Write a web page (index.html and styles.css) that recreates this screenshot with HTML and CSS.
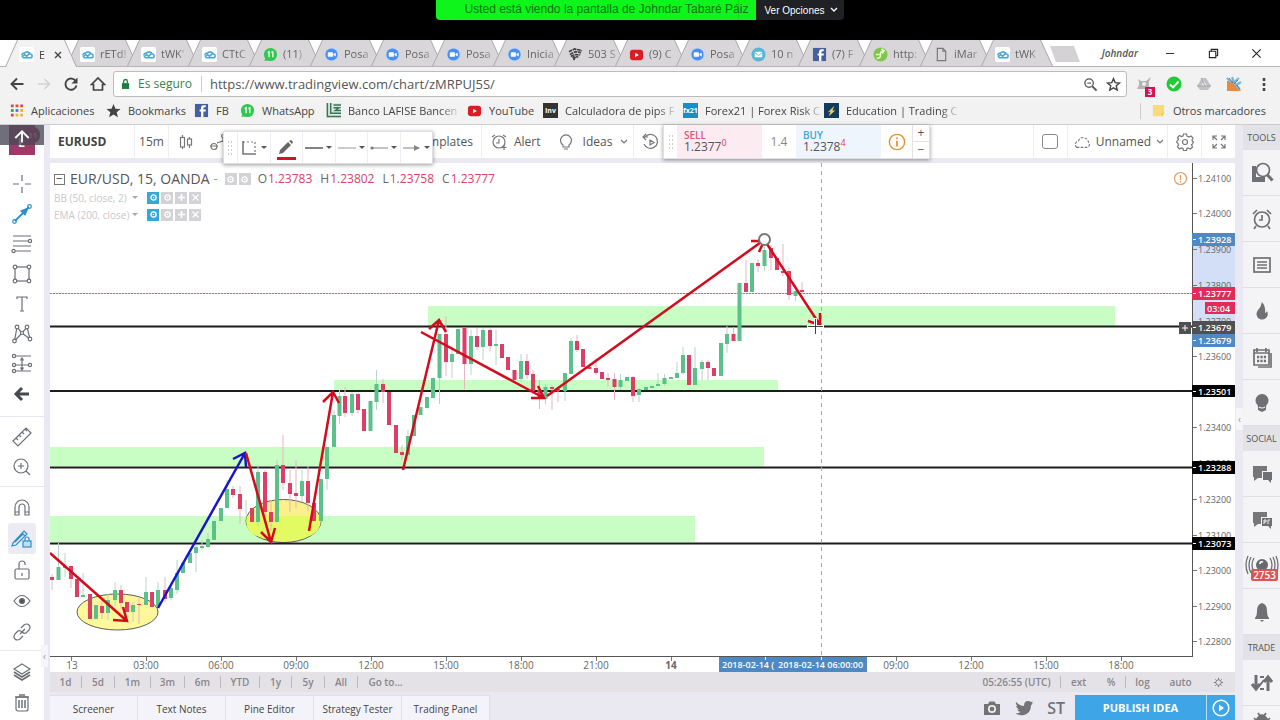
FILE: index.html
```html
<!DOCTYPE html>
<html lang="es">
<head>
<meta charset="utf-8">
<title>EURUSD</title>
<link rel="stylesheet" href="styles.css">
</head>
<body>
<svg class="sprite" aria-hidden="true">
  <symbol id="tv" viewBox="0 0 16 16"><rect width="16" height="16" rx="2" fill="#fff"/><path d="M3 11l3-3 2 2 4-4M4 11.500h8a2 2 0 0 0 0-4 3.500 3.500 0 0 0-6-1 2.500 2.500 0 0 0-3 2.500" fill="none" stroke="#45a9d6" stroke-width="1.600"/></symbol>
  <symbol id="wa" viewBox="0 0 16 16"><circle cx="8" cy="8" r="7" fill="#2dc84d"/><path d="M1.500 15l1-4 3 3z" fill="#2dc84d"/><path d="M5 6l1.500-1v6M9 6l1.500-1v6" fill="none" stroke="#fff" stroke-width="1.400"/></symbol>
  <symbol id="zoomcam" viewBox="0 0 16 16"><circle cx="8" cy="8" r="7.500" fill="#b9d8f8"/><circle cx="8" cy="8" r="6.500" fill="#4b8df0"/><rect x="4" y="5.500" width="5.500" height="5" rx="1" fill="#fff"/><path d="M10 7.500l2.500-1.500v4L10 8.500z" fill="#fff"/></symbol>
  <symbol id="wing" viewBox="0 0 16 16"><path d="M1 5l6-3 8 2M2 8l6-3 6 1M3 10l5-2 5 .5M6 14l2-4 3 1M5 12l2-2" fill="none" stroke="#444" stroke-width="1.800" stroke-dasharray="4 .7"/></symbol>
  <symbol id="yt" viewBox="0 0 16 16"><rect x="1" y="3" width="14" height="11" rx="3" fill="#dd1b24"/><path d="M6.500 6v5l4-2.500z" fill="#fff"/></symbol>
  <symbol id="mail" viewBox="0 0 16 16"><circle cx="8" cy="8" r="7.500" fill="#55b6d6"/><rect x="4" y="5" width="8" height="6" rx="1" fill="#fff"/><path d="M4 6l4 3 4-3" fill="none" stroke="#55b6d6"/></symbol>
  <symbol id="fb" viewBox="0 0 16 16"><rect x="1" y="1" width="14" height="14" fill="#4460a0"/><path d="M10 15V9h2.500V7H10V5.500Q10 4.500 11 4.500h1.500v-2H10Q7.500 2.500 7.500 5v2H6v2h1.500v6z" fill="#fff"/></symbol>
  <symbol id="green" viewBox="0 0 16 16"><circle cx="8" cy="8" r="7.500" fill="#83c44b"/><path d="M4 12q4 0 4-3V7q0-2 3-3M9 2l3 2-2 3M3 8h5" fill="none" stroke="#e8ffd8" stroke-width="1.500"/></symbol>
  <symbol id="page" viewBox="0 0 16 16"><path d="M3.500 1.500h6l3 3v10h-9zM9.500 1.500v3h3" fill="none" stroke="#777" stroke-width="1.200"/></symbol>
  <symbol id="eye" viewBox="0 0 11 11"><circle cx="5.500" cy="5.500" r="2.600" fill="none" stroke="#fff" stroke-width="1.300"/><circle cx="5.500" cy="5.500" r=".8" fill="#fff"/></symbol>
  <symbol id="plus" viewBox="0 0 11 11"><path d="M5.500 2v7M2 5.500h7" stroke="#fff" stroke-width="1.600"/></symbol>
  <symbol id="cross" viewBox="0 0 11 11"><path d="M2.500 2.500l6 6M8.500 2.500l-6 6" stroke="#fff" stroke-width="1.200"/></symbol>
</svg>

<header class="share">
  <div class="share-name">Usted está viendo la pantalla de Johndar Tabaré Páiz</div>
  <button class="share-options">Ver Opciones <svg width="8" height="6" viewBox="0 0 8 6"><path d="M1 1l3 3 3-3" fill="none" stroke="#fff" stroke-width="1.300"/></svg></button>
</header>

<nav class="tabs">
  <button class="tab active"><svg><use href="#tv"/></svg><span>E</span><svg class="close" viewBox="0 0 8 8"><path d="M1 1l6 6M7 1L1 7" stroke="#444" stroke-width="1.400"/></svg></button>
  <button class="tab"><svg><use href="#tv"/></svg><span>rETd!</span></button>
  <button class="tab"><svg><use href="#tv"/></svg><span>tWK'</span></button>
  <button class="tab"><svg><use href="#tv"/></svg><span>CTtC</span></button>
  <button class="tab"><svg><use href="#wa"/></svg><span>(11)</span></button>
  <button class="tab"><svg><use href="#zoomcam"/></svg><span>Posa</span></button>
  <button class="tab"><svg><use href="#zoomcam"/></svg><span>Posa</span></button>
  <button class="tab"><svg><use href="#zoomcam"/></svg><span>Posa</span></button>
  <button class="tab"><svg><use href="#zoomcam"/></svg><span>Inicia</span></button>
  <button class="tab"><svg><use href="#wing"/></svg><span>503 S</span></button>
  <button class="tab"><svg><use href="#yt"/></svg><span>(9) C</span></button>
  <button class="tab"><svg><use href="#zoomcam"/></svg><span>Posa</span></button>
  <button class="tab"><svg><use href="#mail"/></svg><span>10 n</span></button>
  <button class="tab"><svg><use href="#fb"/></svg><span>(7) F</span></button>
  <button class="tab"><svg><use href="#green"/></svg><span>http:</span></button>
  <button class="tab"><svg><use href="#page"/></svg><span>iMar</span></button>
  <button class="tab"><svg><use href="#tv"/></svg><span>tWK</span></button>
  <button class="newtab" aria-label="Nueva pestaña"></button>
  <span class="profile">Johndar</span>
  <button class="win" aria-label="Minimizar"><svg viewBox="0 0 12 12"><path d="M1 6h9" stroke="#222"/></svg></button>
  <button class="win" aria-label="Restaurar"><svg viewBox="0 0 12 12"><path d="M1.500 3.500h7v7h-7zM3.500 3V1.500h7v7H9" fill="none" stroke="#222" stroke-width="1.200"/></svg></button>
  <button class="win" aria-label="Cerrar"><svg viewBox="0 0 12 12"><path d="M1.500 1.500l9 9M10.500 1.500l-9 9" stroke="#222" stroke-width="1.200"/></svg></button>
</nav>

<div class="address">
  <button aria-label="Atrás"><svg viewBox="0 0 16 16"><path d="M14.500 8H2.500M8 2.500L2.500 8 8 13.500" fill="none" stroke="#444" stroke-width="1.900"/></svg></button>
  <button aria-label="Adelante"><svg viewBox="0 0 16 16"><path d="M2 8h11M8.500 3l5 5-5 5" fill="none" stroke="#d2d2d2" stroke-width="1.600"/></svg></button>
  <button aria-label="Recargar"><svg viewBox="0 0 16 16"><path d="M13 5.500A5.600 5.600 0 1 0 13.500 9.500" fill="none" stroke="#444" stroke-width="1.900"/><path d="M14.500 1.500v6h-6z" fill="#444"/></svg></button>
  <button aria-label="Inicio"><svg viewBox="0 0 16 16"><path d="M1.500 8.500L8 2l6.500 6.500h-2v5.500h-9V8.500z" fill="none" stroke="#444" stroke-width="1.700"/></svg></button>
  <div class="urlbox">
    <svg class="lock" viewBox="0 0 10 12"><rect x="1" y="5" width="8" height="6.500" fill="#1b7f3b"/><path d="M3 5V3a2 2 0 0 1 4 0v2" fill="none" stroke="#1b7f3b" stroke-width="1.400"/></svg>
    <span class="secure">Es seguro</span>
    <input class="url" type="text" aria-label="Dirección" value="https://www.tradingview.com/chart/zMRPUJ5S/">
    <svg viewBox="0 0 16 16"><circle cx="6.500" cy="6.500" r="4.500" fill="none" stroke="#555" stroke-width="1.400"/><path d="M10 10l4.500 4.500" stroke="#555" stroke-width="2"/><path d="M4.500 6.500h4" stroke="#555" stroke-width="1.200"/></svg>
    <svg viewBox="0 0 16 16"><path d="M8 1.800l1.800 4.200 4.600.4-3.500 3 1.100 4.500-4-2.400-4 2.400 1.100-4.500-3.500-3 4.600-.4z" fill="none" stroke="#444" stroke-width="1.500"/></svg>
  </div>
  <div class="extensions">
    <button class="ext" aria-label="Extensión"><svg viewBox="0 0 16 16"><path d="M2 3l3 2h5l5-4-2 5v4l2 3H1l2-4V6z" fill="#b4b3b5"/><circle cx="8" cy="8" r="2" fill="#eee"/></svg><span class="ext-badge">3</span></button>
    <button class="ext" aria-label="Verificado"><svg viewBox="0 0 16 16"><circle cx="8" cy="8" r="7.500" fill="#20cb37"/><path d="M4 8.500l3 3 5.500-6" fill="none" stroke="#fff" stroke-width="1.900"/></svg></button>
    <button class="ext" aria-label="Drive"><svg viewBox="0 0 16 16"><path d="M6 2h4l5 8-3 4H4l-3-4z" fill="#c1c1c3"/><path d="M8 5l3 5H5z" fill="#e9e9e9"/><path d="M5 2l4 8M1 10h14" stroke="#a7a7aa"/></svg></button>
    <button class="ext" aria-label="Herramienta"><svg viewBox="0 0 16 16"><path d="M1 5h7l7 10H1z" fill="#e58b42"/><path d="M1 2l4 4M6 1l3 8M13 2l-6 5M15 6l-5 3M10 10l4 4" stroke="#7fb4da" stroke-width="2.200"/><path d="M3 2l4 5M12 4l-4 4M11 9l3 4" stroke="#3d83b8"/></svg></button>
    <button class="ext" aria-label="Menú"><svg viewBox="0 0 16 16"><path d="M8 2v3M8 7v3M8 12v3" stroke="#444" stroke-width="2.600"/></svg></button>
  </div>
</div>

<nav class="bookmarks">
  <a href="#"><svg viewBox="0 0 16 16"><path d="M2 3h3M2 13h3" stroke="#dc4b3e" stroke-width="3"/><path d="M7 3h3M12 3h3" stroke="#dc4b3e" stroke-width="3"/><path d="M2 8h3" stroke="#36a454" stroke-width="3"/><path d="M7 8h3" stroke="#3a7de0" stroke-width="3"/><path d="M12 8h3M7 13h8" stroke="#eab52f" stroke-width="3" stroke-dasharray="3 2"/></svg><span>Aplicaciones</span></a>
  <a href="#"><svg viewBox="0 0 16 16"><path d="M8 1l2.100 5 5.400.400-4.100 3.500 1.300 5.200L8 12.300l-4.700 2.800 1.300-5.200L.5 6.400 5.900 6z" fill="#444"/></svg><span>Bookmarks</span></a>
  <a href="#"><svg><use href="#fb"/></svg><span>FB</span></a>
  <a href="#"><svg><use href="#wa"/></svg><span>WhatsApp</span></a>
  <a href="#"><svg viewBox="0 0 16 16"><rect width="16" height="16" fill="#dfe9e3"/><path d="M1.500 0v14.500H16M5 0v11h11M8 2h8M8 5h6l-4 3h6" fill="none" stroke="#397557" stroke-width="1.600"/></svg><span class="fade">Banco LAFISE Bancen</span></a>
  <a href="#"><svg><use href="#yt"/></svg><span>YouTube</span></a>
  <a href="#"><i class="mark dark">Inv</i><span class="fade">Calculadora de pips F</span></a>
  <a href="#"><i class="mark blue">fx21</i><span class="fade">Forex21 | Forex Risk C</span></a>
  <a href="#"><svg viewBox="0 0 16 16"><rect width="16" height="16" fill="#123b5d"/><path d="M4 10l7-7-2 5h3l-7 6 2-5z" fill="#f0cf68"/></svg><span class="fade">Education | Trading C</span></a>
  <a href="#" class="others"><svg viewBox="0 0 16 16"><path d="M2 2h12v9l-2 3H2z" fill="#f8dc79"/><path d="M12 14v-3h2" fill="none" stroke="#e5bd4e"/></svg><span>Otros marcadores</span></a>
</nav>

<main class="app">
  <aside class="drawbar">
    <div class="logo"><b>L</b><small>11</small><div class="logo-shade"><svg viewBox="0 0 16 16"><path d="M2 8l6-6 6 6M8 3v9" fill="none" stroke="#fff" stroke-width="1.600"/></svg></div></div>
    <div class="tools first">
      <button aria-label="Cruz"><svg viewBox="0 0 22 22"><path d="M11 2v6M11 14v6M2 11h6M14 11h6"/></svg></button>
      <button aria-label="Línea" class="on"><svg viewBox="0 0 22 22"><path d="M4 18L18 4" stroke-width="1.800"/><path d="M17 5l-7 3 4 4z" fill="#2b8fcb"/><circle cx="3.500" cy="18.500" r="1.800"/><circle cx="18.500" cy="3.500" r="1.800"/></svg></button>
      <button aria-label="Fibonacci"><svg viewBox="0 0 22 22"><path d="M2 3h18M2 8h15M2 13h18M4 18h16"/><circle cx="19" cy="8" r="1.600"/><circle cx="2.500" cy="18" r="1.600"/></svg></button>
      <button aria-label="Rectángulo"><svg viewBox="0 0 22 22"><rect x="4" y="4" width="14" height="14"/><g fill="#fff"><circle cx="4" cy="4" r="1.800"/><circle cx="18" cy="4" r="1.800"/><circle cx="4" cy="18" r="1.800"/><circle cx="18" cy="18" r="1.800"/></g></svg></button>
      <button aria-label="Texto"><svg viewBox="0 0 22 22"><path d="M6 6V4h10v2M11 4v14M9 18h4"/></svg></button>
      <button aria-label="Patrones"><svg viewBox="0 0 22 22"><path d="M3.500 18L6 4l5 6 5-6 3 12-8-6z"/><g fill="#fff"><circle cx="6" cy="4" r="1.800"/><circle cx="16" cy="4" r="1.800"/><circle cx="3.500" cy="18" r="1.800"/><circle cx="19" cy="16" r="1.800"/><circle cx="11" cy="10" r="1.500"/></g></svg></button>
      <button aria-label="Proyección"><svg viewBox="0 0 22 22"><path d="M3 3h17M3 12h15M3 18h17M11 6v10M9.500 7.500L11 5l1.500 2.500M9.500 14.500L11 17l1.500-2.500"/><g fill="#fff"><circle cx="3" cy="3" r="1.600"/><circle cx="3" cy="12" r="1.600"/><circle cx="19" cy="12" r="1.600"/><circle cx="3" cy="18" r="1.600"/></g></svg></button>
      <button aria-label="Volver"><svg viewBox="0 0 22 22"><path d="M18 11H6M11 5l-6 6 6 6" stroke="#464950" stroke-width="3"/></svg></button>
    </div>
    <div class="tools">
      <button aria-label="Regla"><svg viewBox="0 0 22 22"><path d="M2 15L15 2l5 5L7 20zM5 12l2 2M8 9l2 2M11 6l2 2M14 3l2 2"/></svg></button>
      <button aria-label="Acercar"><svg viewBox="0 0 22 22"><circle cx="10" cy="10" r="7"/><path d="M15 15l4 4M10 7v6M7 10h6"/></svg></button>
    </div>
    <div class="tools tall">
      <button aria-label="Imán"><svg viewBox="0 0 22 22"><path d="M4 18v-8a7 7 0 0 1 14 0v8h-4v-8a3 3 0 0 0-6 0v8zM4 15h4M14 15h4"/></svg></button>
      <button aria-label="Bloquear dibujo" class="on picked"><svg viewBox="0 0 22 22"><path d="M2 15L13 3l3 3L5 17l-4 1zM11 5l3 3M4 14l8-8"/><rect x="12" y="13" width="8" height="6" fill="#bfe0f4"/><path d="M14 13v-2a2 2 0 0 1 4 0v2"/></svg></button>
      <button aria-label="Candado"><svg viewBox="0 0 22 22"><rect x="4" y="10" width="14" height="10" rx="1.500"/><path d="M8 10V5a3 3 0 0 1 6 0v1M11 14v3"/></svg></button>
      <button aria-label="Ocultar"><svg viewBox="0 0 22 22"><path d="M3 11q8-11 16 0-8 11-16 0z"/><circle cx="11" cy="11" r="2.500" fill="#555"/></svg></button>
      <button aria-label="Enlace"><svg viewBox="0 0 22 22"><path d="M9 13l5-5M10 7l3-3q3-2 5 0t0 5l-3 3q-2 1-4-1M12 15l-3 3q-3 2-5 0t0-5l3-3q2-1 4 1"/></svg></button>
    </div>
    <div class="tools tall">
      <button aria-label="Capas"><svg viewBox="0 0 22 22"><path d="M11 3l8 5-8 5-8-5z"/><path d="M3 11l8 5 8-5M3 14l8 5 8-5" stroke-width="1.800"/></svg></button>
      <button aria-label="Eliminar"><svg viewBox="0 0 22 22"><rect x="5" y="5" width="12" height="14" rx="2"/><path d="M4 5h14M8 3h6M8 8v8M11 8v8M14 8v8" stroke-width="1.500"/></svg></button>
    </div>
  </aside>

  <section class="center">
    <div class="topbar">
      <button class="symbol">EURUSD</button>
      <button class="cell">15m</button>
      <button class="cell" aria-label="Velas"><svg viewBox="0 0 18 18"><path d="M5.500 2v2.500M5.500 14v2M12.500 4v2M12.500 12v3"/><rect x="3.500" y="4.500" width="4" height="9.500"/><rect x="10.500" y="6" width="4" height="6"/></svg></button>
      <button class="cell compare" aria-label="Comparar"><svg viewBox="0 0 18 18"><path d="M13 4v5M7 10l6-2 4 3M0 13h8"/><circle cx="4" cy="13.500" r="3"/><circle cx="13" cy="3" r="1.500"/></svg></button>
      <button class="templates">Templates</button>
      <button class="cell wide"><svg viewBox="0 0 18 18"><circle cx="9" cy="9" r="6"/><path d="M9 6v4H6M2 4l3-2M13 2l3 2M14 12v5M11.500 14.500h5"/></svg>Alert</button>
      <button class="cell ideas"><svg viewBox="0 0 18 18"><path d="M6 12a5.500 5.500 0 1 1 6 0v2H6zM7 16h4"/></svg>Ideas<svg class="caret" viewBox="0 0 8 6"><path d="M1 1l3 3 3-3"/></svg></button>
      <button class="cell replay" aria-label="Replay"><svg viewBox="0 0 18 18"><path d="M3 4a7 7 0 1 1-1 7M1 4h5M4 1L1 4l3 3M8 7l4 2.500L8 12z"/></svg></button>
      <span></span>
      <label class="cell check"><input type="checkbox" aria-label="Diseño"></label>
      <button class="cell layout"><svg viewBox="0 0 20 18"><path d="M4 15h12a3.500 3.500 0 0 0 1-6 4 4 0 0 0-3-4 5 5 0 0 0-8 3 4 4 0 0 0-2 7z" stroke-dasharray="3 1.500"/></svg>Unnamed<svg class="caret" viewBox="0 0 8 6"><path d="M1 1l3 3 3-3"/></svg></button>
      <button class="cell" aria-label="Ajustes"><svg viewBox="0 0 18 18"><path d="M7.500 1h3l.5 2 2 1 2-1 2 2-1 2 .5 1.500L17.500 9 16.500 11l-1 .5 1 2.500-2 2-2.500-1-1 .5-.5 2h-3L7 15.500 5.500 15 3.500 16l-2-2 1-2L2 10.500.5 9l1.500-2 .5-.5-1-2 2-2 2 1 1.500-.5z"/><circle cx="9" cy="9" r="2.500"/></svg></button>
      <button class="cell" aria-label="Pantalla completa"><svg viewBox="0 0 18 18"><path d="M3 7V3h4M3 3l4 4M11 3h4v4M15 3l-4 4M3 11v4h4M3 15l4-4M15 11v4h-4M15 15l-4-4"/></svg></button>

      <div class="stylebar">
        <span class="grip"></span>
        <button aria-label="Plantilla"><svg viewBox="0 0 18 18"><path d="M3 2v13h13" stroke-width="1.600"/><path d="M3 3h12v12" stroke-dasharray="2 2"/></svg><i class="tri"></i></button>
        <button class="pen" aria-label="Color"><svg viewBox="0 0 18 18"><path d="M2 15l1-4 8-8 3 3-8 8zM12 2l2-1 2 2-1 2z" fill="#666" stroke="none"/></svg></button>
        <button aria-label="Grosor"><svg viewBox="0 0 18 18"><path d="M0 9h18" stroke-width="1.800"/></svg><i class="tri"></i></button>
        <button aria-label="Estilo"><svg viewBox="0 0 18 18"><path d="M0 9h18" stroke="#aaa"/></svg><i class="tri"></i></button>
        <button aria-label="Extremo izquierdo"><svg viewBox="0 0 18 18"><path d="M1 9h17" stroke="#999"/><circle cx="2" cy="9" r="1"/></svg><i class="tri"></i></button>
        <button aria-label="Extremo derecho"><svg viewBox="0 0 18 18"><path d="M0 9h16" stroke="#999"/><path d="M11 6l6 3-6 3z" fill="#888" stroke="none"/></svg><i class="tri"></i></button>
      </div>

      <div class="trade">
        <span class="grip"></span>
        <button class="quote sell"><b>SELL</b><span>1.2377<sup>0</sup></span></button>
        <span class="spread">1.4</span>
        <button class="quote buy"><b>BUY</b><span>1.2378<sup>4</sup></span></button>
        <button class="info" aria-label="Información"><svg viewBox="0 0 20 20"><circle cx="10" cy="10" r="8.500" fill="none" stroke="#e69336" stroke-width="1.600"/><path d="M10 8.500V15M10 5v2" stroke="#e69336" stroke-width="2"/></svg></button>
        <div class="steps"><button aria-label="Aumentar">+</button><button aria-label="Reducir">−</button></div>
      </div>
    </div>

    <div class="chart">
      <svg class="plot" viewBox="50 163 1185 509">
        <g fill="#c8fdc4">
          <path d="M428 306h687v20H428zM334 380h444v10H334zM50 447h714v19H50zM50 516h645v26H50z"/>
        </g>
        <g stroke="#5c6350" fill="#fff79b"><ellipse cx="117.500" cy="612" rx="40.500" ry="18"/><ellipse cx="283.500" cy="521" rx="37.500" ry="21.500" fill="#fbf08a"/></g>
        <path d="M247 516h73q3 13-8 19-28 12-58 0-10-6-7-19z" fill="#e3fb62"/>
        <path d="M50 326.500h1142M50 391h1142M50 467.500h1142M50 543.500h1142" stroke="#1c1c1c" stroke-width="2"/>
        <path d="M50 293.500h1142" stroke="#f6cdd7"/><path d="M50 293.500h1142" stroke="#dc6282" stroke-dasharray="2 1"/>
        <path d="M821.500 163V657" stroke="#aaa" stroke-dasharray="4 4"/>
        <path class="wick-up" d="M58.500 543v24M65 553v24M83 573v22M108 594v26M115 582v24M133 602v20M146 577v28M158 582v26M171 586v14M177 560v34M196 545v27M202 540v10M208 533v15M227 480v28M246 500v15M258 465v61M277 460v62M302 470v32M327 447v43M334 410v37M339.500 390v34M352 392v24M376.500 370v40M408 430v30M439.500 334v70M452 346v32M471 330v45M483 328v32M496 330v35M521 354v28M545.500 384v20M565 373v28M571 338v36M620.500 374v16M639 388v14M658 373v12M664.500 374v12M677 362v14M683 347v28M695 347v38M702 360v20M727 326v27M764.500 247v24M795.500 285v16"/>
        <path class="wick-down" d="M52 574v16M71 566v22M102 600v19M121 585v24M139 597v27M165 577v25M233 486v12M240 486v38M265 470v50M271 500v30M283 435v55M290 470v42M296 460v48M308 466v45M345 387v30M358 393v20M383 379v24M402 445v15M446 316v60M464.500 328v61M477 328v22M490 328v23M533 370v24M527 354v25M539.500 380v29M552 385v25M558 387v15M577 335v17M596 358v17M608 373v14M614.500 373v27M633 376v26M708 360v20M733.500 327v14M746 260v32M758 259v13M771 245v25M783 244v32M789 268v32M802 282v12"/>
        <path class="body-up" d="M58.500 567v13M65 566v2M83 595v2M96 605v14M108 600v13M115 590v10M133 605v7M146 592v13M158 590v16M171 588v10M177 573v17M183 563v10M190 553v10M196 547v6M202 546v2M208 539v8M214 521v19M221 508v13M227 489v19M258 472v50M277 465v57M302 481v15M321 479v42M327 447v32M334 415v32M339.500 396v20M352 394v19M370.500 401v30M376.500 384v18M408 436v19M414 415v21M420.500 407v8M427 397v11M433 378v20M439.500 334v44M452 354v8M458 329v25M471 336v28M483 330v17M496 344v2M521 361v18M545.500 387v12M565 373v18M571 341v33M620.500 380v7M627 377v4M639 389v6M646 387v3M652 386v2M658 384v2M664.500 378v6M671 377v2M677 373v5M683 355v18M695 368v17M702 362v7M721 343v33M727 334v10M739.500 283v58M752 263v29M764.500 250v16M795.500 291v5"/>
        <path class="body-down" d="M52 577v3M71 566v13M77 579v18M90 594v25M102 606v7M121 590v13M127 602v10M139 604v1M152 592v15M165 590v9M233 489v6M240 494v15M252 508v14M265 472v40M271 512v10M283 465v18M290 483v11M296 493v3M308 481v22M314 503v18M345 396v17M358 394v16M364 409v22M383 384v8M389 392v33M396 425v28M402 452v3M446 334v28M464.500 328v36M477 336v11M490 330v16M502 344v14M508 357v13M514.500 370v10M527 361v14M533 374v17M539.500 390v7M552 387v2M558 389v2M577 341v9M583 349v18M589.500 367v2M596 368v5M602 372v7M608 378v2M614.500 379v8M633 377v19M689 355v30M708 362v6M714 368v8M733.500 334v7M746 283v9M758 263v3M771 248v10M777 258v12M783 271v2M789 271v24M802 290v2"/>
        <path class="arrow blue-arrow" d="M158 608L245 453M233 459l12-6 1 14"/>
        <path class="arrow" d="M50 553l77 68M113 620l14 1-4-14M246 453l25 89M261 532l10 10 4-14M309 531l24-139M323 402l10-10 6 11M403 470l36-150M429 329l10-9 7 12M421 332l123 66M531 398h13l-6-12M547 396l217-156M751 241h13l-5 11M765 241l55 84M808 321l12 4v-12"/>
        <circle cx="764.500" cy="239.500" r="5.500" fill="#fff" stroke="#777" stroke-width="2"/>
        <path d="M807 326.500h17M815.500 318v16" stroke="#fff" stroke-width="3"/><path d="M808 326.500h15M815.500 319v15" stroke="#444"/>
        <circle cx="1180.500" cy="178.500" r="6" fill="none" stroke="#df9a68" stroke-width="1.200"/><path d="M1180.500 175v5M1180.500 181v1.500" stroke="#df9a68" stroke-width="1.200"/>

        <path d="M1193 240h42v100h-42z" fill="#d2dff7"/>
        <path d="M50 656.500h1142.500M1192.500 163v494" fill="none" stroke="#555"/>
        <path d="M1193 178.500h4M1193 213.500h4M1193 249.500h4M1193 285.500h4M1193 321.500h4M1193 356.500h4M1193 427.500h4M1193 499.500h4M1193 535.500h4M1193 570.500h4M1193 606.500h4M1193 641.500h4M71.500 657v4M146.500 657v4M221.500 657v4M296.500 657v4M371.500 657v4M446.500 657v4M521.500 657v4M596.500 657v4M671.500 657v4M896.500 657v4M971.500 657v4M1046.500 657v4M1121.500 657v4" stroke="#777"/>
        <g class="prices">
          <text x="1198" y="182">1.24100</text><text x="1198" y="217">1.24000</text><text x="1198" y="253">1.23900</text><text x="1198" y="289">1.23800</text><text x="1198" y="325">1.23700</text><text x="1198" y="360">1.23600</text><text x="1198" y="431">1.23400</text><text x="1198" y="467">1.23300</text><text x="1198" y="503">1.23200</text><text x="1198" y="539">1.23100</text><text x="1198" y="574">1.23000</text><text x="1198" y="610">1.22900</text><text x="1198" y="645">1.22800</text>
        </g>
        <path d="M1192 233h43v13h-43zM1192 334h43v13h-43z" fill="#4e89c3"/>
        <path d="M1192 287h43v13h-43zM1205 302h30v12h-30z" fill="#e02b5b"/>
        <path d="M1192 321h43v13h-43zM1179 322h12v12h-12z" fill="#505050"/>
        <path d="M1182 328h6M1185 325v6" stroke="#fff"/>
        <path d="M1192 385h43v12h-43zM1192 461h43v13h-43zM1192 537h43v13h-43z" fill="#000"/>
        <path d="M1193 239.500h3M1193 293.500h3M1193 327.500h3M1193 340.500h3M1193 391.500h3M1193 467.500h3M1193 543.500h3" stroke="#fff"/>
        <g class="prices tags">
          <text x="1198" y="243">1.23928</text><text x="1198" y="297">1.23777</text><text x="1207" y="312">03:04</text><text x="1198" y="331">1.23679</text><text x="1198" y="344">1.23679</text><text x="1198" y="395">1.23501</text><text x="1198" y="471">1.23288</text><text x="1198" y="547">1.23073</text>
        </g>
        <g class="times">
          <text x="72" y="669">13</text><text x="146" y="669">03:00</text><text x="221" y="669">06:00</text><text x="296" y="669">09:00</text><text x="371" y="669">12:00</text><text x="446" y="669">15:00</text><text x="521" y="669">18:00</text><text x="596" y="669">21:00</text><text x="671" y="669" class="day">14</text><text x="896" y="669">09:00</text><text x="971" y="669">12:00</text><text x="1046" y="669">15:00</text><text x="1121" y="669">18:00</text>
        </g>
        <path d="M719 657h148v15H719z" fill="#4e89c3"/>
        <path d="M765.500 657v3M821.500 657v3" stroke="#fff"/>
        <g class="prices tags"><text x="722" y="668">2018-02-14 (</text><text x="778" y="668">2018-02-14 06:00:00</text></g>
      </svg>
      <div class="legend">
        <div class="legend-main">
          <button class="fold" aria-label="Contraer">−</button><h1>EUR/USD, 15, OANDA</h1><i class="dash">-</i>
          <button class="chip"><svg><use href="#eye"/></svg></button><button class="chip"><svg><use href="#eye"/></svg></button>
          <span class="ohlc">O<b>1.23783</b></span><span class="ohlc">H<b>1.23802</b></span><span class="ohlc">L<b>1.23758</b></span><span class="ohlc">C<b>1.23777</b></span>
        </div>
        <div class="study"><span>BB (50, close, 2)</span><i class="tri"></i><button class="chip lit"><svg><use href="#eye"/></svg></button><button class="chip"><svg><use href="#eye"/></svg></button><button class="chip"><svg><use href="#plus"/></svg></button><button class="chip"><svg><use href="#cross"/></svg></button></div>
        <div class="study"><span>EMA (200, close)</span><i class="tri"></i><button class="chip lit"><svg><use href="#eye"/></svg></button><button class="chip"><svg><use href="#eye"/></svg></button><button class="chip"><svg><use href="#plus"/></svg></button><button class="chip"><svg><use href="#cross"/></svg></button></div>
      </div>
    </div>

    <div class="ranges">
      <button>1d</button><button>5d</button><button>1m</button><button>3m</button><button>6m</button><button>YTD</button><button>1y</button><button>5y</button><button>All</button><button class="plain">Go to...</button><span></span>
      <button>05:26:55 (UTC)</button><button class="plain">ext</button><button>%</button><button class="plain">log</button><button class="plain">auto</button>
      <button class="plain" aria-label="Opciones"><svg viewBox="0 0 12 12"><circle cx="6" cy="6" r="3" fill="none" stroke="#777"/><path d="M6 1v2M6 9v2M1 6h2M9 6h2M2.500 2.500l1.500 1.500M8 8l1.500 1.500M9.500 2.500L8 4M4 8L2.500 9.500" stroke="#777"/></svg></button>
    </div>

    <div class="bottom">
      <button class="btab">Screener</button><button class="btab">Text Notes</button><button class="btab">Pine Editor</button><button class="btab">Strategy Tester</button><button class="btab">Trading Panel</button>
      <div class="social">
        <button aria-label="Captura"><svg viewBox="0 0 18 18"><path d="M1 5h4l1.500-2.500h5L13 5h4v11H1z" fill="#737277"/><circle cx="9" cy="10" r="3.200" fill="none" stroke="#eee" stroke-width="1.700"/></svg></button>
        <button aria-label="Twitter"><svg viewBox="0 0 18 18"><path d="M1 3q4 4 8 4 0-5 4-5 2 0 3 1l2-.5-1.500 2 1.500-.2-2 2Q16 14 9 16q-5 1-8.500-1.500Q4 14.500 5.500 13 3 12.500 2.300 10.500H4Q1 9 1.200 6.800l1.600.5Q0 5 1 3z" fill="#737277"/></svg></button>
        <button class="st">ST</button>
      </div>
      <button class="publish">PUBLISH IDEA</button>
      <button class="publish play" aria-label="Transmitir"><svg viewBox="0 0 18 18"><circle cx="9" cy="9" r="7.800" fill="none" stroke="#fff" stroke-width="1.500"/><path d="M7 5.500v7l5-3.500z" fill="#fff"/></svg></button>
    </div>
    <button class="handle left" aria-label="Plegar">‹</button>
    <button class="handle right" aria-label="Plegar">‹</button>
  </section>

  <aside class="side">
    <h2>TOOLS</h2>
    <button aria-label="Lista"><svg viewBox="0 0 24 24"><path d="M2 5h4v11h9v5H2z" fill="#6f7073" stroke="none"/><circle cx="13" cy="9" r="6.500" fill="#f4f4f6"/><path d="M17.500 14l5 5.500" stroke-width="3"/></svg></button>
    <button aria-label="Alertas"><svg viewBox="0 0 24 24"><circle cx="12" cy="12.500" r="7.500"/><path d="M12 8v5H9M3 7l4-4M17 3l4 4M6 19l-2 3M18 19l2 3"/></svg></button>
    <button aria-label="Noticias"><svg viewBox="0 0 24 24"><rect x="4" y="5" width="16" height="14"/><path d="M7 9h10M7 12h10M7 15h10"/></svg></button>
    <button aria-label="Tendencias"><svg viewBox="0 0 24 24"><path d="M12 3q-1 5-4 8-3 4 0 8 4 3 8 0 3-3 1-7-1 2-2 2 1-6-3-11z" fill="#6f7073" stroke="none"/></svg></button>
    <button aria-label="Calendario"><svg viewBox="0 0 24 24"><path d="M4 5h15v15H4zM4 8h15M7 3v4M16 3v4M21 8v14H8"/><path d="M7 12h9M7 16h9" stroke-width="2.500" stroke-dasharray="2.200 1.200"/></svg></button>
    <button aria-label="Ideas"><svg viewBox="0 0 24 24"><path d="M8 16q0-2-2-4a6.500 6.500 0 1 1 12 0q-2 2-2 4v3l-4 2-4-2z" fill="#6f7073" stroke="none"/><path d="M9 16q3 2 6 0" stroke="#eee" stroke-width="1.200"/></svg></button>
    <h2>SOCIAL</h2>
    <button aria-label="Chat"><svg viewBox="0 0 24 24"><path d="M3 4h14v5h-5v7H8l-4 3v-4H3z" fill="#77777a" stroke="none"/><path d="M13 10h9v8h-1v3l-3-3h-5z" fill="#6f7073" stroke="none"/></svg></button>
    <button aria-label="Privado"><svg viewBox="0 0 24 24"><path d="M3 4h14v5h-6v7H8l-4 3v-4H3z" fill="#77777a" stroke="none"/><path d="M12 10h10v8h-1v3l-3-3h-6z" fill="#6f7073" stroke="none"/><path d="M14 16v-4h2v2h-2M18 16v-4h2" stroke="#eee" stroke-width="1"/></svg></button>
    <button class="live" aria-label="Flujo"><svg viewBox="0 0 30 24"><circle cx="15" cy="11" r="6" fill="#68696c" stroke="none"/><path d="M7 4q-4 7 0 14M4 3q-4 8 0 16M1 2q-4 9 0 18M23 4q4 7 0 14M26 3q4 8 0 16M29 2q4 9 0 18" stroke-width="1.300"/><path d="M13 10q0-3 3-2" stroke="#fff"/></svg><span>2753</span></button>
    <button aria-label="Avisos"><svg viewBox="0 0 24 24"><path d="M12 3q5 1 5 8 0 5 2 7v1H5v-1q2-2 2-7 0-7 5-8zM10 20h4l-2 2z" fill="#6f7073" stroke="none"/></svg></button>
    <h2>TRADE</h2>
    <button aria-label="Órdenes"><svg viewBox="0 0 24 24"><path d="M6 4v13M2 13l4 5 4-5M18 20V7M14 11l4-5 4 5" stroke-width="3"/><path d="M10 6h4M10 18h4M10 14l4-5" stroke-width="2"/></svg></button>
    <button class="bug" aria-label="Errores"><svg viewBox="0 0 24 24"><path d="M7 9q5-8 10 0v9H7zM4 8l3 3M20 8l-3 3M8 3l2 3M16 3l-2 3" fill="#6f7073"/></svg></button>
  </aside>
</main>
</body>
</html>
```
FILE: styles.css
```css
* { box-sizing: border-box; }
html, body { height: 100%; }
body {
  margin: 0;
  display: flex;
  flex-direction: column;
  overflow: hidden;
  background: #fff;
  color: #444;
  font: 12px/16px "Open Sans", "Noto Sans", sans-serif;
}
button { margin: 0; padding: 0; border: 0; background: none; color: inherit; font: inherit; }
a { color: inherit; text-decoration: none; }
svg { display: block; flex: none; }
i { font-style: normal; }
.sprite { position: absolute; width: 0; height: 0; }

.share { flex: none; display: flex; justify-content: center; align-items: flex-start; height: 40px; background: #000; font: 12px/19px "Liberation Sans", sans-serif; }
.share-name { width: 320px; height: 20px; padding-left: 20px; border-radius: 0 0 0 4px; background: linear-gradient(90deg, #0df51a 302px, #0bdd17 302px, #0bdd17 303px, #0df51a 303px); color: #087314; text-align: center; white-space: nowrap; }
.share-options { display: flex; align-items: center; gap: 5px; height: 20px; padding: 0 6px 0 8px; border-radius: 0 0 4px 0; background: #202124; color: #fff; font-size: 10px; }

.tabs { flex: none; display: flex; height: 27px; padding-left: 5px; background: #fff; border-bottom: 1px solid #b5b3b5; }
.tab { position: relative; flex: 0 1 72px; min-width: 0; height: 26px; margin-right: -11px; padding: 2px 10px 0 14px; display: flex; align-items: center; gap: 5px; color: #666; font-size: 11px; isolation: isolate; overflow: hidden; }
.tab::before, .tab::after { content: ""; position: absolute; inset: 0; z-index: -1; clip-path: polygon(12px 0, calc(100% - 12px) 0, 100% 100%, 0 100%); background: #aaa8aa; }
.tab::after { inset: 0 1px; background: #d9d6d9; }
.tab.active { z-index: 1; gap: 5px; color: #444; height: 27px; }
.tab.active::after { background: #f2f2f2; }
.tab svg { width: 15px; height: 15px; }
.tab span { overflow: hidden; white-space: nowrap; mask-image: linear-gradient(90deg, #000 70%, #0006); }
.tab .close { width: 8px; height: 8px; margin-left: 4px; }
.newtab { width: 30px; height: 16px; margin: 6px 0 0 8px; background: #d5d2d5; clip-path: polygon(0 0, 80% 0, 100% 100%, 20% 100%); }
.profile { margin: 5px 11px 0 auto; color: #555; font-size: 10px; font-style: italic; font-weight: 600; }
.win { width: 43px; display: grid; place-items: center; }
.win:last-child { margin-right: 2px; }
.win svg { width: 11px; height: 11px; }

.address { flex: none; display: flex; align-items: center; gap: 11px; height: 32px; padding: 2px 8px 0 9px; background: #f2f2f2; }
.address > button svg { width: 16px; height: 16px; }
.urlbox { flex: 1; display: flex; align-items: center; height: 26px; margin-left: -4px; padding: 0 5px 0 7px; gap: 8px; background: #fff; border: 1px solid #bdbbbd; border-radius: 3px; font-size: 13px; }
.urlbox svg { width: 15px; height: 15px; }
.urlbox .lock { width: 9px; height: 12px; }
.secure { padding-right: 9px; border-right: 1px solid #ccc; color: #35824b; white-space: nowrap; font-size: 12px; }
.url { flex: 1; min-width: 0; padding: 0; border: 0; outline: 0; color: #555; background: none; font: inherit; }
.extensions { display: flex; gap: 14px; margin-left: -2px; }
.ext { position: relative; width: 16px; height: 16px; }
.ext svg { width: 16px; height: 16px; }
.ext-badge { position: absolute; right: -3px; bottom: -5px; width: 10px; height: 10px; background: #d90f50; color: #fff; font: bold 8px/10px "Open Sans", sans-serif; }

.bookmarks { flex: none; display: grid; grid-template-columns: 97px 88px 46px 86px 141px 76px 140px 141px 131px 1fr; align-items: center; height: 26px; padding: 0 14px 2px 9px; background: #f2f2f2; border-bottom: 1px solid #cdccd0; font-size: 11px; }
.bookmarks a { display: flex; align-items: center; gap: 7px; white-space: nowrap; }
.bookmarks svg { width: 15px; height: 15px; }
.fade { mask-image: linear-gradient(90deg, #000 85%, #0003); }
.mark { width: 15px; height: 15px; color: #fff; font: bold 7px/15px "Open Sans", sans-serif; text-align: center; }
.dark { background: #333; }
.blue { background: #188dca; }
.bookmarks .others { justify-self: end; padding-left: 10px; border-left: 1px solid #ccc; }

.app { flex: 1; min-height: 0; display: grid; grid-template-columns: 44px 1fr 37px; background: #eae8f0; }

.drawbar { overflow: hidden; background: #fff; }
.logo { position: relative; width: 26px; height: 30px; margin: 0 0 8px 9px; background: #9c3c66; color: #fff; text-align: center; }
.logo b { position: absolute; left: 9px; bottom: 4px; }
.logo small { position: absolute; right: -5px; top: 2px; width: 14px; border-radius: 8px; background: #b22a57; font-size: 8px; }
.logo-shade { position: absolute; left: -9px; top: 0; width: 44px; height: 20px; padding: 4px 0 0 13px; background: #4b4a5acc; }
.logo-shade svg { width: 18px; height: 18px; }
.tools { display: flex; flex-direction: column; align-items: center; padding: 5px 0 4px; border-bottom: 1px solid #e8e6ef; }
.tools.first { padding: 6px 0 7px; }
.tools button { width: 28px; height: 30px; display: grid; place-items: center; border-radius: 3px; }
.tools.tall { padding: 5px 0 3px; }
.tools.tall button { height: 31px; }
.tools svg { width: 22px; height: 22px; fill: none; stroke: #6c6f78; stroke-width: 1.2; }
.tools .on svg { stroke: #2b8fcb; }
.tools .picked { background: #eceaf2; }

.center { position: relative; min-width: 0; min-height: 0; margin: 0 8px 0 6px; display: grid; grid-template-rows: 33px minmax(0, 1fr) 20px 28px; }
.topbar { position: relative; display: flex; background: #fff; color: #555; }
.topbar > span { flex: 1; }
.topbar svg { width: 18px; height: 18px; fill: none; stroke: #777; stroke-width: 1.2; }
.topbar .caret { width: 8px; height: 6px; }
.symbol { width: 84px; padding-left: 8px; color: #444; font-weight: 700; text-align: left; }
.cell { display: flex; align-items: center; justify-content: center; min-width: 34px; border-left: 1px solid #efedf4; }
.cell.wide { gap: 6px; padding: 0 8px; }
.cell.ideas { gap: 8px; padding: 0 5px 0 8px; border: 0; }
.cell.layout { gap: 5px; padding: 0 3px 0 5px; }
.compare { border: 0; }
.templates { width: 245px; padding-right: 8px; text-align: right; }
.replay { padding: 0 5px; }
.check input { appearance: none; width: 16px; height: 15px; margin: 0; border: 1px solid #888; border-radius: 3px; }
.tri { width: 0; height: 0; border: 3px solid transparent; border-top-color: #555; border-bottom: 0; }
.grip { width: 6px; height: 16px; background: radial-gradient(circle, #ccc 1px, transparent 1px) 0 0 / 3px 4px; }

.stylebar, .trade { position: absolute; z-index: 2; display: flex; align-items: center; background: #fff; border: 1px solid #e0dfe4; box-shadow: 0 1px 4px #0006; }
.stylebar { left: 173px; top: 6px; width: 210px; height: 33px; padding-left: 3px; }
.stylebar button { flex: 1; height: 31px; display: flex; align-items: center; justify-content: center; gap: 3px; border-left: 1px solid #efedf4; }
.stylebar .grip { margin-right: 4px; }
.stylebar .pen { position: relative; }
.stylebar .pen::after { content: ""; position: absolute; left: 6px; right: 6px; bottom: 3px; height: 3px; background: #e00b25; }
.trade { left: 613px; top: 0; width: 267px; height: 34px; border-top: 0; }
.trade .grip { margin: 0 3px 0 4px; }
.quote { width: 85px; height: 33px; padding: 4px 7px; display: flex; flex-direction: column; text-align: left; line-height: 12px; }
.quote b { font-size: 10px; font-weight: 600; }
.quote sup { color: #dd3c67; font-size: 9px; line-height: 0; }
.sell { background: #fdebf2; }
.sell b { color: #e0557a; }
.spread { width: 34px; text-align: center; color: #888; }
.buy { background: #eef5fd; }
.buy b { color: #43a5d4; }
.info { flex: 1; display: grid; place-items: center; }
.steps { width: 17px; height: 33px; display: grid; border-left: 1px solid #e4e2e9; }
.steps button + button { border-top: 1px solid #e4e2e9; }

.chart { position: relative; margin-top: 5px; min-height: 0; background: #fff; }
.plot { width: 100%; height: 100%; }
.wick-up { stroke: #b5d6c2; }
.wick-down { stroke: #e7b4c2; }
.body-up { stroke: #5bc08a; stroke-width: 4; }
.body-down { stroke: #dc3e66; stroke-width: 4; }
.arrow { fill: none; stroke: #d30b1d; stroke-width: 2.5; }
.blue-arrow { stroke: #1a16c6; }
.prices text, .times text { font: 10px "Open Sans", sans-serif; fill: #666; }
.prices text { font-size: 9px; }
.prices.tags text { font-weight: 600; fill: #fff; }
.times text { text-anchor: middle; }
.times .day { font-weight: 700; }

.legend { position: absolute; left: 4px; top: 6px; }
.legend-main { display: flex; align-items: center; height: 20px; }
.legend h1 { margin: 0 4px 0 5px; font-size: 14px; font-weight: 400; color: #555; white-space: nowrap; }
.fold { width: 11px; height: 11px; border: 1px solid #777; line-height: 8px; }
.dash { width: 11px; color: #999; }
.chip { width: 12px; height: 12px; margin-right: 2px; background: #d3d2d6; display: grid; place-items: center; }
.chip svg { width: 11px; height: 11px; }
.lit { background: #38a7d6; }
.ohlc { margin-left: 5px; margin-right: 3px; color: #666; }
.ohlc b { margin-left: 1px; color: #d64368; font-weight: 400; }
.study { display: flex; align-items: center; height: 17px; color: #c8c7cb; font-size: 10px; }
.study span { width: 78px; white-space: nowrap; }
.study .tri { margin-right: 9px; border-top-color: #aaa; }

.ranges { display: grid; grid-template-columns: 32px 33px 36px 34px 36px 39px 32px 33px 33px 56px 1fr 88px 36px 29px 34px 42px 33px; align-items: center; background: #e4e2e6; color: #88868c; font-size: 10px; font-weight: 600; }
.ranges button { height: 12px; line-height: 12px; border-right: 1px solid #bbb9bf; white-space: nowrap; }
.ranges .plain { border-color: transparent; }
.ranges svg { width: 11px; height: 11px; margin: auto; }

.bottom { display: flex; margin-top: 3px; font-size: 10px; }
.btab { width: 88px; padding-top: 2px; background: #f4f3f9; border: 1px solid #e0dee7; border-left: 0; border-bottom: 0; white-space: nowrap; }
.social { display: flex; align-items: center; gap: 14px; margin: 0 10px 0 auto; color: #737277; }
.social svg { width: 18px; height: 18px; }
.st { font-size: 16px; font-weight: 600; }
.publish { width: 131px; background: #3ea6e6; color: #fff; font-size: 11px; font-weight: 700; }
.play { width: 29px; display: grid; place-items: center; border-left: 1px solid #b8def6; }
.play svg { width: 18px; height: 18px; }
.handle { position: absolute; width: 7px; height: 22px; background: #f6f5f9; color: #999; font-size: 10px; }
.left { left: -9px; bottom: 53px; }
.right { right: -8px; bottom: 290px; }

.side { overflow: hidden; background: #f4f4f6; }
.side h2 { margin: 0; height: 25px; background: #e3e2e6; color: #555; font-size: 9px; font-weight: 400; line-height: 25px; text-align: center; }
.side button { position: relative; width: 100%; height: 46px; display: grid; place-items: center; border-bottom: 1px solid #e0dfe4; }
.side svg { width: 24px; height: 24px; fill: none; stroke: #6f7073; stroke-width: 1.7; }
.side .live svg { width: 30px; overflow: visible; }
.live span { position: absolute; right: 2px; bottom: 7px; padding: 0 2px; background: #df5353; border-radius: 2px; color: #fff; font-size: 10px; font-weight: 600; line-height: 12px; }
.side .bug { place-items: start center; padding-top: 4px; }
```
